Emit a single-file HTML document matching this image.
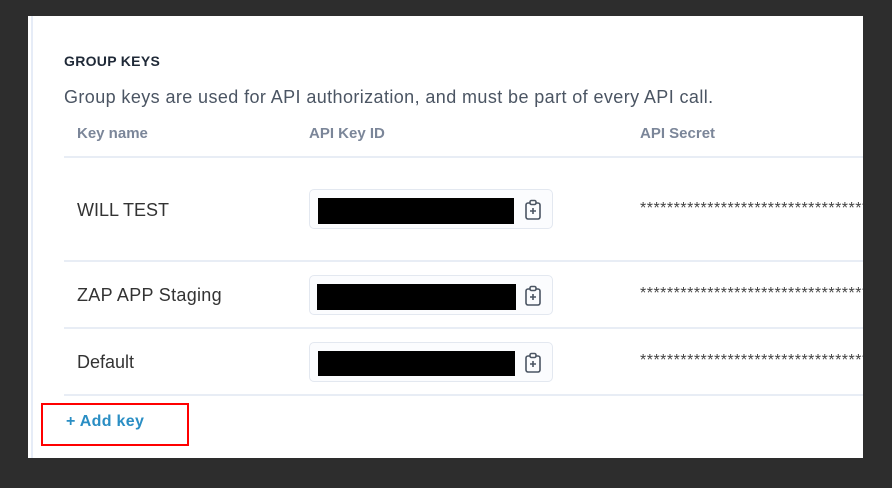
<!DOCTYPE html>
<html><head><style>
body{margin:0;width:892px;height:488px;background:#2d2d2d;position:relative;overflow:hidden;font-family:"Liberation Sans",sans-serif}
.panel{position:absolute;left:28px;top:16px;width:835px;height:442px;background:#fff}
.lb{position:absolute;left:31px;top:16px;width:2px;height:442px;background:#e6ecf7}
.t{position:absolute;white-space:nowrap}
.hr{position:absolute;left:64px;right:29px;height:2px;background:#e8edf5}
.box{position:absolute;left:309px;width:244px;height:40px;border:1px solid #e3e8f0;border-radius:5px;background:#fbfcfe;box-sizing:border-box}
.blk{position:absolute;left:8px;top:8px;width:196px;height:26px;background:#000}
.ic{position:absolute;left:214px;top:9px}
.star{position:absolute;left:640px;font-size:16px;color:#444;letter-spacing:0.5px;width:223px;overflow:hidden}
</style></head><body>
<div class="panel"></div>
<div class="lb"></div>
<div class="t" style="left:64px;top:53px;font-size:14px;font-weight:bold;color:#1f2937;letter-spacing:0.3px">GROUP KEYS</div>
<div class="t" style="left:64px;top:87px;font-size:18px;letter-spacing:0.4px;color:#4b5563">Group keys are used for API authorization, and must be part of every API call.</div>
<div class="t" style="left:77px;top:125px;font-size:15px;font-weight:bold;color:#7b8699">Key name</div>
<div class="t" style="left:309px;top:125px;font-size:15px;font-weight:bold;color:#7b8699">API Key ID</div>
<div class="t" style="left:640px;top:125px;font-size:15px;font-weight:bold;color:#7b8699">API Secret</div>
<div class="hr" style="top:156px"></div>
<div class="hr" style="top:260px"></div>
<div class="hr" style="top:327px"></div>
<div class="hr" style="top:394px"></div>
<div class="t" style="left:77px;top:200px;font-size:18px;color:#333">WILL TEST</div>
<div class="t" style="left:77px;top:285px;font-size:18px;letter-spacing:0.3px;color:#333">ZAP APP Staging</div>
<div class="t" style="left:77px;top:352px;font-size:18px;color:#333">Default</div>
<div class="box" style="top:189px"><div class="blk" style="width:196px"></div><svg class="ic" width="18" height="22" viewBox="0 0 18 22" fill="none" stroke="#4b5563" stroke-width="1.6"><rect x="2" y="4" width="14" height="16" rx="2"/><rect x="6" y="1.5" width="6" height="4" rx="1.5" fill="#fff"/><path d="M9 9v6M6 12h6"/></svg></div>
<div class="box" style="top:275px"><div class="blk" style="left:7px;width:199px"></div><svg class="ic" width="18" height="22" viewBox="0 0 18 22" fill="none" stroke="#4b5563" stroke-width="1.6"><rect x="2" y="4" width="14" height="16" rx="2"/><rect x="6" y="1.5" width="6" height="4" rx="1.5" fill="#fff"/><path d="M9 9v6M6 12h6"/></svg></div>
<div class="box" style="top:342px"><div class="blk" style="width:197px;height:25px"></div><svg class="ic" width="18" height="22" viewBox="0 0 18 22" fill="none" stroke="#4b5563" stroke-width="1.6"><rect x="2" y="4" width="14" height="16" rx="2"/><rect x="6" y="1.5" width="6" height="4" rx="1.5" fill="#fff"/><path d="M9 9v6M6 12h6"/></svg></div>
<div class="t star" style="top:200px">****************************************</div>
<div class="t star" style="top:285px">****************************************</div>
<div class="t star" style="top:352px">****************************************</div>
<div style="position:absolute;left:41px;top:403px;width:148px;height:43px;border:2px solid #f00;box-sizing:border-box"></div>
<div class="t" style="left:66px;top:413px;font-size:16px;letter-spacing:0.3px;font-weight:bold;color:#2a8ec4">+ Add key</div>
</body></html>
